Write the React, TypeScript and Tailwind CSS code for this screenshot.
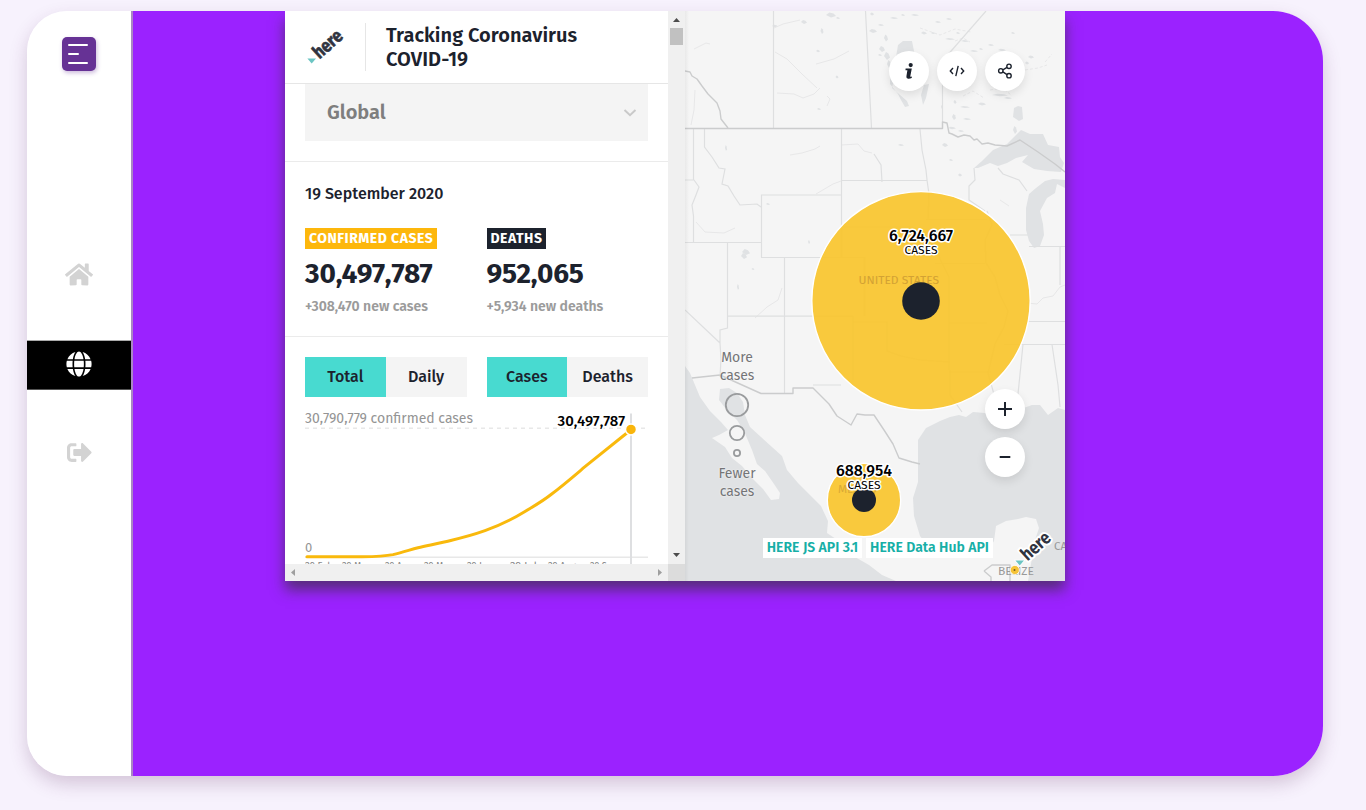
import React from "react";
import { FaHome, FaGlobe, FaSignOutAlt } from "react-icons/fa";

const font = "font-['Fira_Sans','Noto_Sans',sans-serif]";

function HereLogo({ className, halo }: { className?: string; halo?: boolean }) {
  return (
    <svg viewBox="0 0 40 40" className={`overflow-visible ${className ?? ""}`} aria-label="here">
      <text
        transform="translate(14.6 32.6) rotate(-42)"
        fontSize="18.5"
        fontWeight="700"
        textLength="33"
        lengthAdjust="spacingAndGlyphs"
        fill="#30343f"
        stroke={halo ? "#fff" : "#30343f"}
        strokeWidth={halo ? 4 : 0.6}
        strokeLinejoin="round"
        paintOrder="stroke"
      >
        here
      </text>
      <path d="M2.4 31.4H11L6.7 36.4Z" fill="#6cc5c3" stroke={halo ? "#fff" : "none"} strokeWidth="1.5" paintOrder="stroke" />
    </svg>
  );
}

function Sidebar() {
  return (
    <nav className="flex h-full w-[106px] shrink-0 flex-col items-center border-r-2 border-[#a987c4] bg-white">
      <button className="mt-[26px] flex h-[34px] w-[34px] flex-col items-start justify-center gap-[7px] rounded-[5px] bg-[#663295] pb-[1px] pl-[6px] shadow-[1px_2px_4px_#66339555]">
        <span className="h-[2px] w-[20px] rounded-full bg-white" />
        <span className="h-[2px] w-[11px] rounded-full bg-white" />
        <span className="h-[2px] w-[20px] rounded-full bg-white" />
      </button>
      <a className="mt-[191px] flex h-[25px] w-[28px]">
        <FaHome className="h-[25px] w-[28px] text-[#d3d3d3]" />
      </a>
      <a className="mt-[53px] flex h-[50px] w-full items-center justify-center border-t border-b border-t-[#aaa] border-b-[#555] bg-black pb-[3px]">
        <FaGlobe className="h-[26px] w-[26px] text-white" />
      </a>
      <a className="mt-[50px] flex h-[25px] w-[25px]">
        <FaSignOutAlt className="h-[25px] w-[25px] text-[#d3d3d3]" />
      </a>
    </nav>
  );
}

function Stat({ label, value, delta, tone }: { label: string; value: string; delta: string; tone: string }) {
  return (
    <div className="flex flex-1 flex-col items-start">
      <span className={`h-[21px] pr-[4px] pl-[4px] text-[14px] leading-[21px] font-bold tracking-[0.5px] whitespace-nowrap text-white ${tone}`}>{label}</span>
      <span className="mt-[7px] h-[36px] text-[28px] leading-[36px] font-bold tracking-[-0.15px] whitespace-nowrap text-[#1c222d]">{value}</span>
      <span className="mt-[4px] h-[20px] text-[14px] leading-[21px] font-semibold whitespace-nowrap text-[#9b9b9b]">{delta}</span>
    </div>
  );
}

function Toggle({ left, right }: { left: string; right: string }) {
  return (
    <div className="flex h-[40px] flex-1 text-[16px] font-medium text-[#1c222d]">
      <button className="flex-1 bg-[#48dad0]">{left}</button>
      <button className="flex-1 bg-[#f4f4f4]">{right}</button>
    </div>
  );
}

function Chart() {
  const months = [
    ["29 Feb", 305, 28], ["29 Mar", 342, 28], ["29 Apr", 385, 26], ["29 May", 424, 29],
    ["29 Jun", 467, 26], ["29 Jul", 510, 27], ["29 Aug", 548, 28], ["29 Sep", 590, 27],
  ] as const;
  return (
    <svg viewBox="305 397 343 167" className="block h-[167px] w-[343px] overflow-hidden">
      <path d="M305 428.2H648" stroke="#e8e8e8" strokeWidth="1.6" strokeDasharray="4 4" />
      <path d="M305 557.2H648" stroke="#e8e8e8" strokeWidth="1.4" />
      <path d="M631 413.5V564" stroke="#dedfe1" strokeWidth="2" />
      <text x="305" y="423" fontSize="14" textLength="168" fill="#949494">30,790,779 confirmed cases</text>
      <text x="305" y="552" fontSize="13" fill="#949494">0</text>
      {months.map(([label, x, width]) => (
        <text key={label} x={x} y="569.8" fontSize="10.5" textLength={width} lengthAdjust="spacingAndGlyphs" fill="#888">{label}</text>
      ))}
      <path d="M307 556.8H362C376 556.6 385 556.2 393 554.6C403 552.2 410 549.8 418 547.7C430 545 441 543 451.7 540.2C463 537.6 474 534.6 485 530.7C498 526 512 519.5 525 511.5C534 506 543 501 551.7 494C563 485.5 574 476 585 466.7L630 430.5" fill="none" stroke="#f9b90c" strokeWidth="3" strokeLinecap="round" />
      <circle cx="631" cy="429.4" r="5.5" fill="#f9b50c" stroke="#fff" strokeWidth="1.5" />
      <text x="557.5" y="426" fontSize="14.5" fontWeight="500" textLength="67.5" lengthAdjust="spacingAndGlyphs" fill="#000" stroke="#fff" strokeWidth="3" paintOrder="stroke">30,497,787</text>
    </svg>
  );
}

function DataPanel() {
  return (
    <div className="flex h-full w-[400px] shrink-0 flex-col">
      <div className="flex h-[553px]">
        <div className="flex h-full w-[383px] flex-col overflow-hidden bg-white">
          <header className="flex h-[73px] shrink-0 items-center border-b border-[#e6e6e6] pl-[20px]">
            <HereLogo className="h-[40px] w-[40px]" />
            <span className="ml-[20px] h-[48px] w-px bg-[#e6e6e6]" />
            <h1 className="ml-[20px] text-[20px] leading-[24px] font-semibold tracking-[0.04px] text-[#1c222d]">
              Tracking Coronavirus
              <br />
              COVID-19
            </h1>
          </header>
          <div className="h-[78px] shrink-0 border-b border-[#ebebeb] px-[20px]">
            <div className="flex h-[57px] items-center justify-between bg-[#f4f4f4] pr-[11px] pl-[22px]">
              <span className="pb-[2px] text-[20px] font-semibold text-[#7e7e7e]">Global</span>
              <svg viewBox="0 0 14 10" className="h-[10px] w-[14px]" fill="none" stroke="#c9c9c9" strokeWidth="2"><path d="M1.5 2L7 7.2L12.5 2" /></svg>
            </div>
          </div>
          <section className="h-[175px] shrink-0 border-b border-[#ebebeb] px-[20px] pt-[22px]">
            <div className="h-[20px] text-[16px] leading-[20px] font-medium text-[#1c222d]">19 September 2020</div>
            <div className="mt-[24px] flex gap-[20px]">
              <Stat label="CONFIRMED CASES" value="30,497,787" delta="+308,470 new cases" tone="bg-[#fdb70c]" />
              <Stat label="DEATHS" value="952,065" delta="+5,934 new deaths" tone="bg-[#1c222d]" />
            </div>
          </section>
          <section className="px-[20px] pt-[20px]">
            <div className="flex gap-[20px]">
              <Toggle left="Total" right="Daily" />
              <Toggle left="Cases" right="Deaths" />
            </div>
            <Chart />
          </section>
        </div>
        <div className="flex w-[17px] flex-col items-center bg-[#f0f0f0]">
          <svg viewBox="0 0 17 17" className="h-[17px] w-[17px]"><path d="M5 11H12L8.5 7Z" fill="#4c4c4c" /></svg>
          <span className="h-[17px] w-[13px] bg-[#c1c1c1]" />
          <svg viewBox="0 0 17 17" className="mt-auto h-[17px] w-[17px]"><path d="M5 6H12L8.5 10Z" fill="#4c4c4c" /></svg>
        </div>
      </div>
      <div className="flex h-[17px]">
        <div className="flex w-[383px] items-center justify-between bg-[#f0f0f0]">
          <svg viewBox="0 0 17 17" className="h-[17px] w-[17px]"><path d="M10 5V12L6 8.5Z" fill="#9f9f9f" /></svg>
          <svg viewBox="0 0 17 17" className="h-[17px] w-[17px]"><path d="M7 5V12L11 8.5Z" fill="#9f9f9f" /></svg>
        </div>
        <div className="w-[17px] bg-[#dcdcdc]" />
      </div>
    </div>
  );
}

const smallLakes: [number, number, number, number][] = [
  [775, 26, 3, 1.2], [804, 22, 3, 2], [831, 15, 5, 2.5], [838, 18, 2, 1], [822, 31, 1.5, 3], [818, 51, 2, 1.2], [837, 77, 1.5, 1.5], [819, 109, 2, 1],
  [872, 14, 2, 1.5], [873, 31, 4, 2], [881, 25, 3, 1], [886, 38, 2, 3.5], [882, 49, 3, 3], [887, 56, 3, 4], [889, 64, 2, 4], [880, 55, 2, 1],
  [894, 18, 4, 1], [903, 15, 2, 1], [915, 15, 4, 1], [924, 33, 3, 1.4], [933, 33, 2, 1], [938, 22, 3, 1], [949, 19, 3, 1], [950, 39, 5, 1],
  [958, 33, 2, 1], [965, 41, 4, 1], [974, 51, 4, 1], [981, 49, 2, 1], [991, 45, 3, 1], [1002, 50, 4, 1.3], [1013, 33, 2, 1], [1031, 57, 3, 1.5],
  [1027, 63, 2, 1.5], [965, 107, 5, 1], [954, 117, 2, 3], [967, 119, 4, 1], [982, 104, 4, 1.5], [1000, 95, 8, 1.2], [1008, 98, 4, 1], [955, 102, 1.5, 2],
  [942, 107, 1, 2], [952, 128, 4, 1.3], [961, 131, 3, 1], [1015, 130, 2, 4], [945, 145, 3, 2], [951, 160, 2, 1], [960, 175, 2, 1.5],
  [901, 145, 3, 1], [726, 148, 1, 3], [746, 252, 4, 3], [744, 256, 3, 3], [753, 269, 1.5, 1], [738, 287, 1, 3], [768, 204, 2, 1], [809, 242, 1, 2],
];

const roundButton = "flex h-[40px] w-[40px] items-center justify-center rounded-full bg-white shadow-[0_4px_10px_rgba(0,0,0,0.1)]";

function MapView() {
  return (
    <div className="relative h-full w-[380px] shrink-0 overflow-hidden bg-[#f5f5f5]">
      <svg viewBox="685 11 380 570" className="absolute inset-0 h-full w-full">
        <g fill="#e0e2e4">
          <path d="M685 366L690 373L695 385L700 397L710 411L721 422L728 430L719 435L712 438L725 447L732 458L742 466L753 479L763 489L771 500L779 499L780 493L774 484L765 471L757 464L752 450L744 431L737 420L726 409L719 400L720 389L729 388L737 393L743 402L745 415L750 427L761 437L772 447L782 456L787 470L798 483L810 495L821 506L828 521L827 533L842 543L855 557L869 565L882 575L896 581H685Z" />
          <path d="M918 465L918 440L926 428L940 421L950 417L959 415L966 417L973 412L985 413L995 417L1015 415L1021 409L1032 405L1040 405L1048 415L1058 408L1065 410V581H1028L1032 558L1035 540L1039 528L1036 519L1026 517L1018 519L1006 521L996 526L994 541L989 549L967 558L946 558L931 550L920 536L914 516L913 498L918 482Z" />
          <path d="M974 168L982 161L993 150L1007 144L1016 135L1021 130L1030 134L1043 134L1048 145L1059 147L1060 157L1064 163L1061 172L1047 171L1034 169L1022 162L1028 155L1016 158L1007 163L998 166L990 163L978 168Z" />
          <path d="M1065 180L1053 179L1045 181L1036 188L1029 194L1026 208L1026 230L1029 241L1034 248L1040 246L1044 235L1043 224L1040 211L1047 198L1055 193L1057 184L1065 188Z" />
          <path d="M898 45L903 41H912L915 56L904 63L896 57ZM890 70H896L892 88L907 101L909 106L905 107L901 100L898 94L890 84ZM924 85L929 84L926 98L923 105L921 95ZM1014 108L1018 106L1022 107L1023 119L1019 121L1013 117Z" />
          {smallLakes.map(([x, y, w, h], i) => (
            <path key={i} d={`M${x - w} ${y}L${x - w / 3} ${y - h}L${x + w / 2} ${y - h * 0.6}L${x + w} ${y + h * 0.4}L${x} ${y + h}Z`} />
          ))}
        </g>
        <g fill="none" stroke="#e7e7e8" strokeWidth="1">
          <path d="M775 52L787 59L802 74L817 88M816 64L834 59L849 51M777 93L794 94L803 98L814 94L820 88M694 49L706 43L710 44M790 155L802 153L815 149L820 146M841 145L858 144L864 151L872 153M696 222L705 232L724 233L735 228M755 318L767 307L778 300L782 288M816 194L833 184L841 181M800 20L783 24L774 28M827 106L830 99L827 96M695 90L694 110L691 125M1000 200L1009 206M1027 303L1037 304L1043 298L1053 296L1060 287L1065 285" />
          <path d="M920 28L940 35L955 29L971 32M955 41L963 38L970 42M1025 70L1038 68L1047 65M1045 62L1052 54M963 96L973 91L984 98M990 90L1003 88L1012 96" strokeDasharray="3 2" />
        </g>
        <g fill="none" stroke="#dedfe0" strokeWidth="1.2">
          <path d="M773.5 11V128M865.5 11L871.5 128M942.5 75V128M986 11L952 50L942 61M693.5 129V180M685 180H694L699 187L696 195L692 205L693.5 216V242M704.5 129V147L712 157L719 168L725 169L722 184L728 186L734 196L740 205L757 204L761 207M841.5 195H761.5V257.5M841.5 129V257.5M841.5 180.5H926.5M920 129L922 150L926 170L927 180L929 194L928 219M882 182L881 165L874 154M685 242.5H761M727.5 243V328L720 330V343L721 359L720 377M685 310L720 343M784.5 258V393M761 257.5H864.5V316M727 316.2H853M853 316V380M853 322H887V351L901 356L920 360L950 362M841 227H912L927 233L936 244L940 259L949 277V323H987M926 219.5H987M935 263.5H985M949 323V370M949 372H991M974 168L975 180L969 186V200L985 211M998 168L1003 174L1019 180L1027 191M1010 235H1028M1029 246.5H1060V285M1060 246.5H1065M1027 321.5H1065M1004 344.5H1065M1023 344.5L1018 394L1020 410M1052 344.5L1058 385L1060 407M813 385H841M950 370V395L962 412" />
          <path d="M987 211L992 225L985 240L986 263L995 277L1000 295L1008 311L1004 327L995 344L988 373L995 398H1009L1013 414" />
        </g>
        <g fill="none" stroke="#cbcccd" strokeWidth="1.4" strokeLinejoin="round">
          <path d="M685 128.5H942.5V122L947 123L949 133L952 134L958 137L964 135L970 136L974 140L977 139L982 144L988 143L995 145L1007 146L1020 140L1038 152L1055 164L1065 172" />
          <path d="M685 71L690 72L692 76L697 79L702 86L708 94L712 98L717 103L720 111L721 119L728 128" />
          <path d="M692 378L720 375L761 393.5H793V388H813L829 404L837 416L851 425L857 414L865 415L874 415L884 430L893 444L899 458L912 462L920 464" />
          <path d="M984 571L992 565H1010V581M984 571L991 577V581" />
        </g>
        <text x="998" y="575" fontSize="11.5" textLength="36" lengthAdjust="spacingAndGlyphs" fill="#999">BELIZE</text>
        <text x="1054" y="550" fontSize="11.5" fill="#999">CAYMAN</text>
        <g fill="#f9c42c" fillOpacity="0.92" stroke="#fff" strokeWidth="1.4">
          <circle cx="921" cy="300.8" r="109.2" />
          <circle cx="864" cy="500" r="36.7" />
        </g>
        <circle cx="1014.8" cy="570" r="4.6" fill="#f5c338" stroke="#fff" strokeWidth="0.8" />
        <text x="858.5" y="284" fontSize="11.5" textLength="80.5" lengthAdjust="spacingAndGlyphs" fill="#d3a234">UNITED STATES</text>
        <text x="838" y="493" fontSize="11.5" fill="#d9a936">MEXICO</text>
        <circle cx="921" cy="301" r="18.8" fill="#1c222d" />
        <circle cx="864" cy="500" r="12" fill="#1c222d" />
        <circle cx="1014.5" cy="570" r="1" fill="#775d20" />
        <g textAnchor="middle" fill="#000" stroke="#fff" strokeWidth="3" strokeLinejoin="round" paintOrder="stroke">
          <text x="921" y="241" fontSize="15.5" fontWeight="500" textLength="64" lengthAdjust="spacingAndGlyphs">6,724,667</text>
          <text x="921" y="254" fontSize="11.5" fontWeight="400" textLength="33" lengthAdjust="spacingAndGlyphs">CASES</text>
          <text x="864" y="475.5" fontSize="15.5" fontWeight="500" textLength="56" lengthAdjust="spacingAndGlyphs">688,954</text>
          <text x="864" y="489" fontSize="11.5" fontWeight="400" textLength="33" lengthAdjust="spacingAndGlyphs">CASES</text>
        </g>
        <g fill="none" stroke="#999b9d" strokeWidth="1.8">
          <circle cx="737" cy="405" r="11.2" />
          <circle cx="737" cy="433" r="7.2" />
          <circle cx="737" cy="453" r="3.1" />
        </g>
      </svg>
      <div className="absolute inset-y-0 left-0 w-[4px] bg-linear-to-r from-black/5 to-transparent" />
      <div className="absolute top-[338px] left-[22px] w-[60px] text-center text-[14px] leading-[18px] text-[#747577] [text-shadow:0_0_2px_white]">More cases</div>
      <div className="absolute top-[454px] left-[22px] w-[60px] text-center text-[14px] leading-[18px] text-[#747577] [text-shadow:0_0_2px_white]">Fewer<br />cases</div>
      <div className="absolute top-[40px] right-[40px] flex gap-[8px] text-[#1c222d]">
        <button className={roundButton}>
          <svg viewBox="0 0 20 20" className="h-[20px] w-[20px]" fill="currentColor"><circle cx="11.7" cy="4.1" r="2.1" /><path d="M6.6 7.4H12.8L11.3 15.3Q11.2 16.2 13 15.6L12.7 17Q10.6 18 9.1 17.7Q7 17.3 7.4 15.2L8.4 9.2H6.5Z" /></svg>
        </button>
        <button className={roundButton}>
          <svg viewBox="0 0 20 20" className="h-[20px] w-[20px]" fill="none" stroke="currentColor" strokeWidth="1.4"><path d="M6 7L3.3 10L6 13M14 7L16.7 10L14 13M11.2 4.8L8.8 15.2" /></svg>
        </button>
        <button className={roundButton}>
          <svg viewBox="0 0 20 20" className="h-[20px] w-[20px]" fill="none" stroke="currentColor" strokeWidth="1.4"><circle cx="5.8" cy="9.8" r="2.2" /><circle cx="14" cy="5.3" r="2.2" /><circle cx="14" cy="14.7" r="2.2" /><path d="M7.9 8.8L12 6.4M7.9 10.9L12 13.6" /></svg>
        </button>
      </div>
      <div className="absolute top-[378px] right-[40px] flex flex-col gap-[8px] text-[#1c222d]">
        <button className={roundButton}>
          <svg viewBox="0 0 14 14" className="h-[14px] w-[14px]" stroke="currentColor" strokeWidth="2"><path d="M0 7H14M7 0V14" /></svg>
        </button>
        <button className={roundButton}>
          <svg viewBox="0 0 14 14" className="h-[14px] w-[14px]" stroke="currentColor" strokeWidth="2"><path d="M1.7 7H12.3" /></svg>
        </button>
      </div>
      <div className="absolute bottom-[23px] left-[78px] flex h-[20px] gap-[4px] text-[14px] leading-[19px] font-semibold whitespace-nowrap text-[#17afa7]">
        <a className="w-[99px] bg-white text-center">HERE JS API 3.1</a>
        <a className="w-[127px] bg-white text-center">HERE Data Hub API</a>
      </div>
      <HereLogo halo className="absolute right-[12px] bottom-[12px] h-[40px] w-[40px]" />
    </div>
  );
}

export default function App() {
  return (
    <div className={`h-[810px] w-full overflow-hidden bg-[#f7f2fd] pt-[11px] pl-[27px] ${font}`}>
      <div className="flex h-[765px] w-[1296px] overflow-hidden rounded-l-[40px] rounded-r-[50px] shadow-[0_8px_18px_rgba(90,40,90,0.22)]">
        <Sidebar />
        <main className="flex flex-1 items-start bg-[#9b22ff] pl-[152px]">
          <div className="flex h-[570px] w-[780px] shadow-[0_9px_13px_0px_rgba(50,50,50,0.65)]">
            <DataPanel />
            <MapView />
          </div>
        </main>
      </div>
    </div>
  );
}
